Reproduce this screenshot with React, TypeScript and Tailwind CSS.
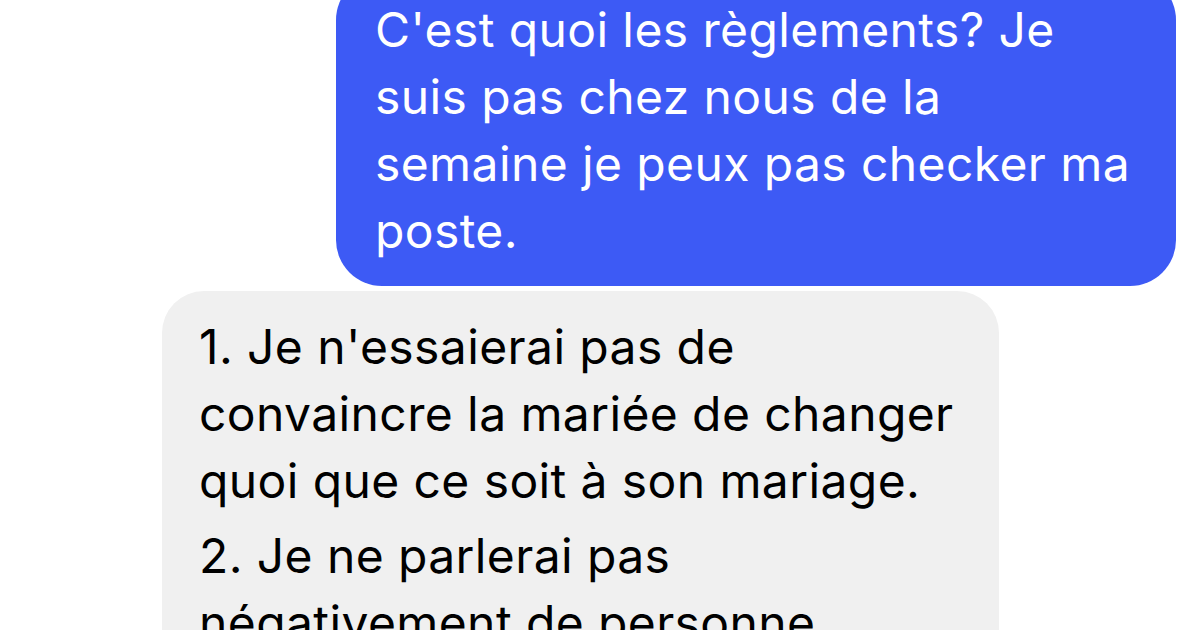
export default function App() {
	const sent = [
		"C'est quoi les règlements? Je",
		"suis pas chez nous de la",
		"semaine je peux pas checker ma",
		"poste.",
	];
	const rules = [
		["1. Je n'essaierai pas de", "convaincre la mariée de changer", "quoi que ce soit à son mariage."],
		["2. Je ne parlerai pas", "négativement de personne."],
	];

	return (
		<div className="w-[1200px] h-[630px] overflow-hidden bg-white font-['Inter','Liberation_Sans',sans-serif] antialiased">
			<div className="flex flex-col -mt-[26px]">
				<div className="self-end mr-[24px] w-[840px] rounded-[46px] bg-[#3d5af5] pl-[39px] pr-[30px] pt-[22px] pb-[22px]">
					{sent.map((line) => (
						<p key={line} className="text-[48px] leading-[67px] tracking-[0.4px] text-white whitespace-nowrap">{line}</p>
					))}
				</div>
				<div className="ml-[162px] mt-[5px] w-[837px] rounded-[42px] bg-[#f0f0f0] pl-[37px] pr-[30px] pt-[22px] pb-[24px]">
					<div className="flex flex-col gap-[8px]">
						{rules.map((para, i) => (
							<div key={i}>
								{para.map((line) => (
									<p key={line} className="text-[48px] leading-[67px] tracking-[0.4px] text-black whitespace-nowrap">{line}</p>
								))}
							</div>
						))}
					</div>
				</div>
			</div>
		</div>
	)
}
